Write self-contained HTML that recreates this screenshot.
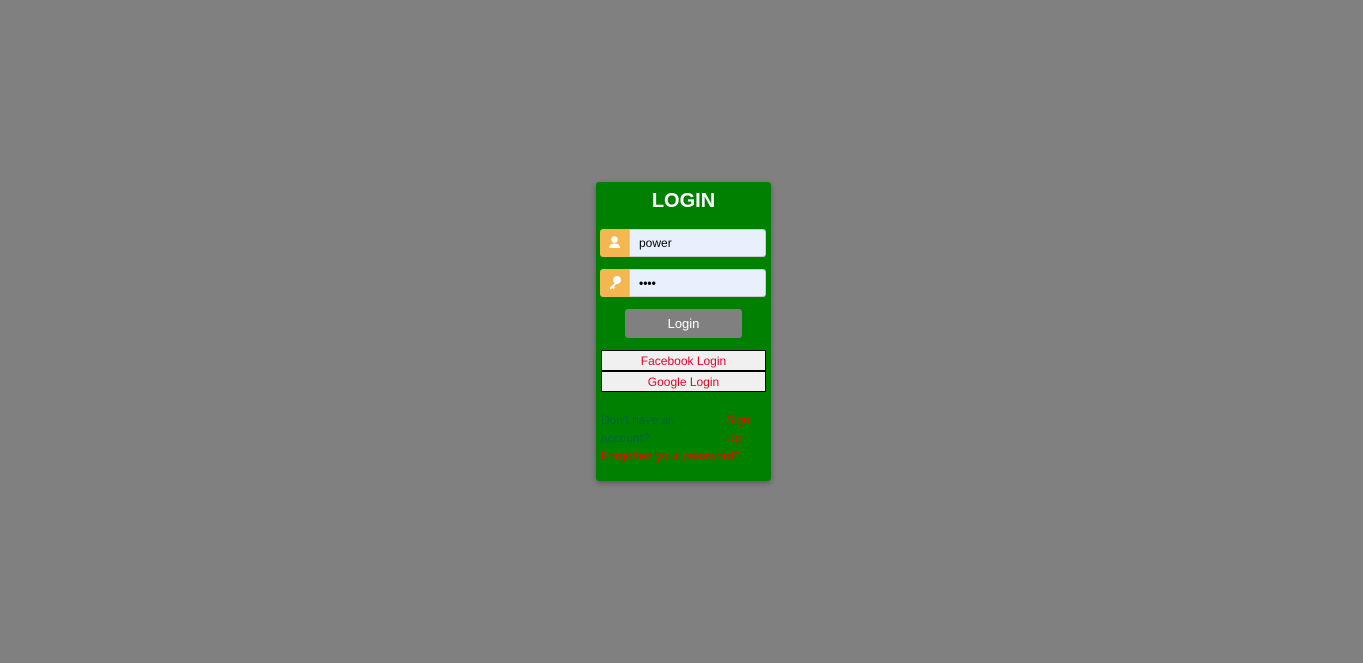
<!DOCTYPE html>
<html><head><style>
body{margin:0;background:#808080;width:1363px;height:663px;position:relative;font-family:"Liberation Sans",sans-serif;}
.card{position:absolute;left:596px;top:182px;width:175px;height:299px;background:#008000;border-radius:3px;box-shadow:0 2px 6px rgba(0,0,0,.3);}
h1{position:absolute;left:596px;width:175px;top:190px;margin:0;text-align:center;color:#fff;font-size:20px;font-weight:bold;line-height:22px;}
.ig{position:absolute;left:600px;width:166px;height:28px;}
.ic{position:absolute;left:0;top:0;width:29px;height:28px;background:#f4b651;border-radius:3px 0 0 3px;}
.in{position:absolute;left:29px;top:0;width:135px;height:26px;background:#e8f0fe;border:1px solid #ccc;border-radius:0 3px 3px 0;font-size:12px;line-height:26px;}
.in span{margin-left:9px}
.btn{position:absolute;left:625px;top:309px;width:117px;height:29px;background:#808080;border-radius:3px;color:#fff;font-size:13px;text-align:center;line-height:29px;}
.s{position:absolute;left:601px;width:163px;height:19px;border:1px solid #000;background:#f0f0f0;color:#e8002a;font-size:12px;text-align:center;line-height:20px;}
.x{position:absolute;font-size:12px;line-height:18px;}
</style></head><body>
<div class="card"></div>
<h1>LOGIN</h1>
<div class="ig" style="top:229px"><div class="ic"><svg width="29" height="28"><circle cx="14.5" cy="10.5" r="3.3" fill="#fff"/><path d="M9 19c0-3 2.5-4.5 5.5-4.5s5.5 1.5 5.5 4.5z" fill="#fff"/></svg></div><div class="in"><span>power</span></div></div>
<div class="ig" style="top:269px"><div class="ic"><svg width="29" height="28"><circle cx="17" cy="11" r="4" fill="#fff"/><path d="M15.5 13l-6 6 1.5 1.5 1.5-1.5 1 1 1.5-1.5-1-1 3-3z" fill="#fff"/></svg></div><div class="in"><span style="font-weight:bold">••••</span></div></div>
<div class="btn">Login</div>
<div class="s" style="top:350px">Facebook Login</div>
<div class="s" style="top:371px">Google Login</div>
<div class="x" style="left:601px;top:411px;color:#063">Don't have an<br>account?</div>
<div class="x" style="left:726px;top:411px;color:#f00">Sign<br>Up</div>
<div class="x" style="left:601px;top:447px;color:#f00">Forgotten your password?</div>
</body></html>
